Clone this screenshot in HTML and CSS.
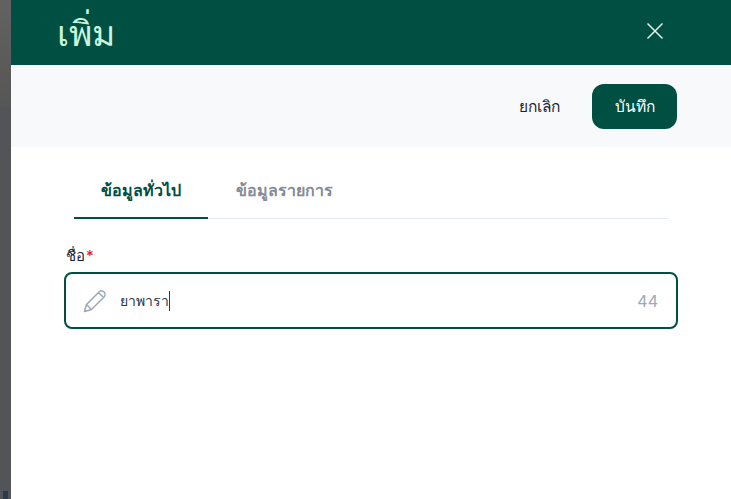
FILE: index.html
```html
<!DOCTYPE html>
<html lang="th">
<head>
    <meta charset="UTF-8">
    <title>เพิ่ม</title>
    <link rel="stylesheet" href="styles.css">
</head>
<body>
    <div class="backdrop">
        <div class="backdrop-top"></div>
        <div class="backdrop-bottom">
            <div class="backdrop-mark"></div>
        </div>
    </div>
    <div class="panel">
        <header class="panel-header">
            <h1>เพิ่ม</h1>
            <button class="close" aria-label="close">
                <svg width="18" height="18" viewBox="0 0 18 18"><path d="M1.500 1.500L16.500 16.500M16.500 1.500L1.500 16.500" stroke="#e6f2ee" stroke-width="1.500" fill="none"/></svg>
            </button>
        </header>
        <div class="toolbar">
            <button class="cancel">ยกเลิก</button>
            <button class="save">บันทึก</button>
        </div>
        <div class="content">
            <div class="tabs">
                <div class="tab active">ข้อมูลทั่วไป</div>
                <div class="tab">ข้อมูลรายการ</div>
            </div>
            <label class="field-label">ชื่อ<span class="req">*</span></label>
            <div class="input-box">
                <svg class="pencil" width="24" height="24" viewBox="0 0 24 24"><path d="M1.500 22.500L3.500 15.500L16.500 2.500Q18.500 1 20.500 2.500L21.500 3.500Q23 5.500 21.500 7.500L8.500 20.500ZM4 16L8 20M15.500 3.500L20.500 8.500" stroke="#9ea6b9" stroke-width="1.500" fill="none" stroke-linejoin="round"/></svg>
                <span class="value">ยาพารา</span><span class="caret"></span>
                <span class="count">44</span>
            </div>
        </div>
    </div>
</body>
</html>
```

FILE: styles.css
```css
* {
    box-sizing: border-box;
}

html, body {
    height: 100%;
}

body {
    margin: 0;
    display: flex;
    overflow: hidden;
    background: #fff;
    font-family: 'Inter', 'Noto Sans', sans-serif;
    color: #1c2434;
}

.backdrop {
    width: 11px;
    display: flex;
    flex-direction: column;
}

.backdrop-top {
    height: 107px;
    background: linear-gradient(180deg, #636261, #565656);
}

.backdrop-bottom {
    flex: 1;
    display: flex;
    flex-direction: column;
    background: #535457;
}

.backdrop-mark {
    margin: auto 3px 0;
    height: 8px;
    background: #2b3a4e;
}

.panel {
    flex: 1;
    display: flex;
    flex-direction: column;
}

.panel-header {
    height: 65px;
    background: #004f43;
    display: flex;
    align-items: center;
    justify-content: space-between;
    padding: 0 67px 4px 46px;
}

.panel-header h1 {
    margin: 6px 0 0;
    font-size: 35.500px;
    font-weight: 400;
    color: #c9f5de;
}

.close {
    border: none;
    background: none;
    padding: 0;
    display: flex;
}

.toolbar {
    height: 82px;
    background: #f8f9fb;
    display: flex;
    align-items: center;
    justify-content: flex-end;
    gap: 9px;
    padding: 0 54px 0 0;
}

.toolbar button {
    border: none;
    font-family: inherit;
    font-size: 15.500px;
    font-weight: 500;
    height: 45px;
    width: 85px;
    border-radius: 12px;
}

.cancel {
    background: none;
    color: #1c2434;
    padding: 0 3px 0 0;
}

.save {
    background: #004f43;
    color: #fff;
}

.content {
    padding: 25px 53px 0;
}

.tabs {
    display: flex;
    margin: 0 10px 0 10px;
    height: 47px;
    border-bottom: 1px solid #e2e8f0;
}

.tab {
    width: 134px;
    padding-top: 6px;
    text-align: center;
    font-size: 16px;
    font-weight: 700;
    color: #868b97;
}

.tab.active {
    height: 47px;
    color: #004f43;
    border-bottom: 2px solid #004f43;
}

.tab + .tab {
    width: 152px;
}

.field-label {
    display: block;
    margin-top: 26px;
    padding-left: 2px;
    height: 21px;
    line-height: 21px;
    font-size: 15px;
    font-weight: 500;
}

.req {
    color: #dc2626;
    margin-left: 1px;
}

.input-box {
    margin-top: 6px;
    height: 57px;
    border: 2px solid #004f43;
    border-radius: 8px;
    display: flex;
    align-items: center;
    padding: 0 18px 0 17px;
    font-size: 14px;
}

.pencil {
    margin-right: 13px;
}

.value {
    color: #2b3648;
}

.caret {
    width: 1px;
    height: 20px;
    background: #004f43;
}

.count {
    margin-left: auto;
    color: #a0a8bb;
    font-size: 16px;
}
```
